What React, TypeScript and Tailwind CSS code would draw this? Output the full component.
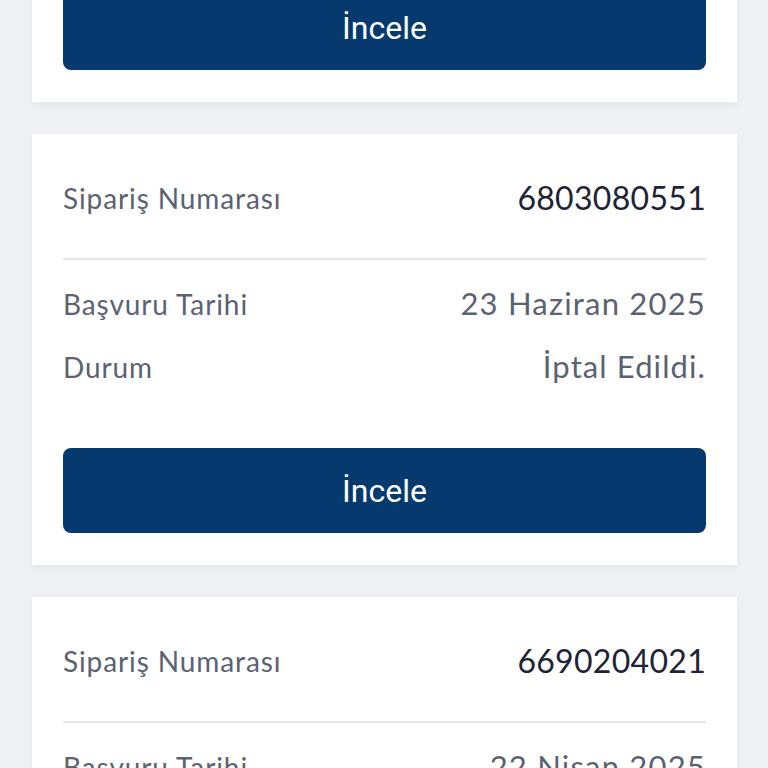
import React from "react";

type Order = { no: string; date: string; status: string };

const orders: Order[] = [
  { no: "6803080552", date: "24 Haziran 2025", status: "İptal Edildi." },
  { no: "6803080551", date: "23 Haziran 2025", status: "İptal Edildi." },
  { no: "6690204021", date: "22 Nisan 2025", status: "İptal Edildi." },
];

function Card({ o }: { o: Order }) {
  return (
    <div className="bg-white shadow-[0_4px_6px_rgba(0,0,0,0.04)] px-[31px] pt-[31px] pb-[32px] mr-[31px] ml-[32px]">
      <div className="h-[66px] flex items-center justify-between">
        <span className="text-[28px] tracking-[0.9px] text-[#5b6272]">Sipariş Numarası</span>
        <span className="text-[32px] tracking-[0.3px] text-[#1f2336]">{o.no}</span>
      </div>
      <div className="mt-[27px] h-[2px] bg-[#e4e6eb]" />
      <div className="pt-[12px]">
        <div className="h-[63px] flex items-center justify-between">
          <span className="text-[28px] tracking-[0.9px] text-[#5b6272]">Başvuru Tarihi</span>
          <span className="text-[31px] tracking-[1.2px] text-[#5b6272]">{o.date}</span>
        </div>
        <div className="h-[63px] flex items-center justify-between">
          <span className="text-[28px] tracking-[0.9px] text-[#5b6272]">Durum</span>
          <span className="text-[31px] tracking-[1.1px] text-[#5b6272]">{o.status}</span>
        </div>
      </div>
      <button
        className="mt-[50px] w-full h-[85px] rounded-[8px] bg-[#063a6e] text-white text-[32px] flex items-center justify-center"
        style={{ fontFamily: "Roboto, 'Liberation Sans', sans-serif" }}
      >
        İncele
      </button>
    </div>
  );
}

export default function App() {
  return (
    <div
      className="w-[768px] h-[768px] overflow-hidden bg-[#eef0f4]"
      style={{ fontFamily: "Lato, 'Noto Sans', sans-serif" }}
    >
      <div className="mt-[-329px] flex flex-col gap-[32px]">
        {orders.map((o) => (
          <Card key={o.no} o={o} />
        ))}
      </div>
    </div>
  );
}
